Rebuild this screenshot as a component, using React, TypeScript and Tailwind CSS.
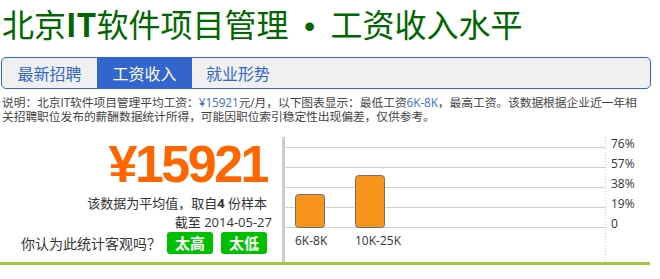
import React from "react";

const font = { fontFamily: '"Open Sans", "Noto Sans CJK SC", sans-serif' } as React.CSSProperties;

export default function App() {
  const lines = [10, 30, 50, 70, 90];
  const labels = ["76%", "57%", "38%", "19%", "0"];
  return (
    <div className="w-[660px] h-[279px] bg-white overflow-hidden font-['Open_Sans','Noto_Sans_CJK_SC',sans-serif]">
      <h1 className="h-[46px] leading-[46px] text-[32px] text-[#006600] pl-[2px] whitespace-nowrap font-['Noto_Sans_CJK_SC',sans-serif]">
        北京<span className="font-bold">IT</span>软件项目管理<span className="inline-block w-[42px] text-center font-['Liberation_Sans',Arial,sans-serif]">•</span>工资收入水平
      </h1>
      <div className="mt-[11px] ml-[1px] w-[650px] h-[32px] border border-[#3366cc] rounded-[5px] bg-[#f0f0f0] flex overflow-hidden text-[16px] font-['Noto_Sans_CJK_SC',sans-serif]">
        <div className="w-[95px] flex items-center justify-center text-[#3366cc]">最新招聘</div>
        <div className="w-[95px] flex items-center justify-center bg-[#3366cc] text-white">工资收入</div>
        <div className="w-[92px] flex items-center justify-center text-[#3366cc]">就业形势</div>
      </div>
      <p className="mt-[6px] pl-[2px] text-[11.8px] leading-[14px] text-[#444] whitespace-nowrap tracking-[-0.1px]" style={font}>
        说明：北京IT软件项目管理平均工资：<span className="text-[#3b6fd0]">¥15921</span>元/月，以下图表显示：最低工资<span className="text-[#3b6fd0]">6K-8K</span>，最高工资。该数据根据企业近一年相
        <br />
        关招聘职位发布的薪酬数据统计所得，可能因职位索引稳定性出现偏差，仅供参考。
      </p>
      <div className="mt-[14px] w-[650px] h-[128px] flex border-b-[3px] border-[#a3c93a]">
        <div className="w-[282px] flex flex-col items-end pr-[15px]">
          <div className="mt-[1px] h-[52px] leading-[52px] text-[52px] font-bold text-[#ff6600] tracking-[-2.5px] font-['Liberation_Sans',Arial,sans-serif]">
            ¥15921
          </div>
          <div className="mt-[4px] text-[13px] leading-[19px] text-[#333] whitespace-nowrap" style={font}>
            该数据为平均值，取自<span className="font-bold">4</span> 份样本
          </div>
          <div className="text-[13px] leading-[19px] text-[#333] whitespace-nowrap mr-[-5px]" style={font}>
            截至 2014-05-27
          </div>
          <div className="h-[22px] flex items-center gap-[6px]">
            <span className="text-[14px] text-[#333] whitespace-nowrap" style={font}>你认为此统计客观吗？</span>
            <div className="flex gap-[8px]">
              <button className="w-[46px] h-[22px] rounded-[3px] bg-[#00c000] text-white text-[15px] font-bold leading-[22px]" style={font}>太高</button>
              <button className="w-[46px] h-[22px] rounded-[3px] bg-[#00c000] text-white text-[15px] font-bold leading-[22px]" style={font}>太低</button>
            </div>
          </div>
        </div>
        <div className="w-[3px] bg-[#cccccc]" />
        <svg width="365" height="125" className="block">
          {lines.map((y) => (
            <line key={y} x1={0} x2={320} y1={y + 0.5} y2={y + 0.5} stroke="#cfcfcf" strokeWidth={1} />
          ))}
          <line x1={320.5} x2={320.5} y1={0} y2={125} stroke="#c8c8c8" strokeWidth={1} strokeDasharray="1 2" />
          {labels.map((l, i) => (
            <text key={l} x={326} y={lines[i] + 1} fontSize={12} fill="#333" fontFamily='"Open Sans", sans-serif'>
              {l}
            </text>
          ))}
          <rect x={10.5} y={57.5} width={29} height={33} rx={3} fill="#f7941a" stroke="#6f6f6f" strokeWidth={1} />
          <rect x={70.5} y={38.5} width={29} height={52} rx={3} fill="#f7941a" stroke="#6f6f6f" strokeWidth={1} />
          <text x={10} y={108} fontSize={12} fill="#333" fontFamily='"Open Sans", sans-serif'>6K-8K</text>
          <text x={70} y={108} fontSize={12} fill="#333" fontFamily='"Open Sans", sans-serif'>10K-25K</text>
        </svg>
      </div>
    </div>
  );
}
